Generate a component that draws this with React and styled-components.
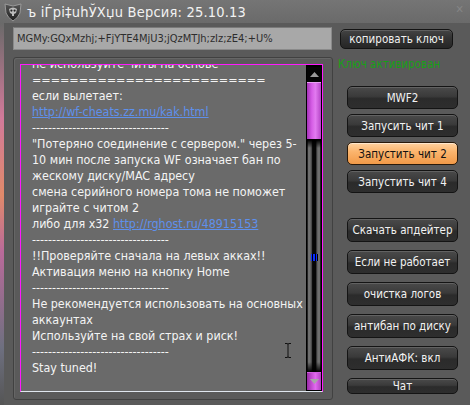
import React from 'react';
import styled, { createGlobalStyle, css } from 'styled-components';

const GlobalStyle = createGlobalStyle`
  html, body {
    margin: 0;
    padding: 0;
    background: #5a5a5a;
  }
  body {
    font-family: 'DejaVu Sans Condensed', 'DejaVu Sans', 'Liberation Sans', sans-serif;
  }
`;

const Window = styled.div`
  width: 470px;
  height: 405px;
  display: flex;
  flex-direction: column;
  overflow: hidden;
  background: #5a5a5a;
`;

const TitleBar = styled.div`
  height: 23px;
  display: flex;
  align-items: center;
  gap: 4px;
  padding: 0 6px 0 3px;
  background: linear-gradient(#757575, #6a6a6a);
  color: #f2f2f2;
  font-size: 14.5px;
  letter-spacing: 0.2px;
`;

const TitleText = styled.span`
  flex: 1;
  white-space: nowrap;
`;

const CloseGlyph = styled.span`
  color: #858585;
  font-size: 11px;
  margin-top: -4px;
`;

const Body = styled.div`
  flex: 1;
  display: flex;
  min-height: 0;
`;

const LeftEdge = styled.div`
  width: 4px;
  flex: none;
  background: linear-gradient(#6a6a6a 0, #d27a9a 25%, #e08a6a 45%, #b96a9a 60%, #6e7080 85%, #555 100%);
`;

const LeftCol = styled.div`
  width: 330px;
  flex: none;
  display: flex;
  flex-direction: column;
  gap: 7px;
  padding: 4px 0 5px 9px;
  box-sizing: border-box;
`;

const KeyField = styled.div`
  height: 23px;
  width: 319px;
  box-sizing: border-box;
  background: #a8a8a8;
  border: 1px solid #8a8a8a;
  border-top-color: #7a7a7a;
  color: #2d2d2d;
  font-size: 11px;
  line-height: 21px;
  padding-left: 3px;
  white-space: nowrap;
  overflow: hidden;
`;

const GroupBox = styled.div`
  flex: 1;
  min-height: 0;
  width: 320px;
  box-sizing: border-box;
  border: 1px solid #414141;
  border-radius: 3px;
  box-shadow: inset 1px 1px 0 #666;
  padding: 6px 9px 7px 6px;
  display: flex;
`;

const TextArea = styled.div`
  flex: 1;
  min-width: 0;
  display: flex;
  background: #6a6a6a;
  border: 1px solid #ff19ff;
  border-bottom-color: #dfe6ee;
  position: relative;
`;

const TextContent = styled.div`
  flex: 1;
  min-width: 0;
  overflow: hidden;
  padding-left: 11px;
  color: #f4f4f4;
  font-size: 12.4px;
  line-height: 16px;
`;

const Scrolled = styled.div`
  margin-top: -9px;
`;

const Line = styled.div`
  white-space: nowrap;
  height: 16px;
`;

const UrlText = styled.span`
  color: #5e90ec;
  text-decoration: underline;
`;

const Scrollbar = styled.div`
  width: 16px;
  flex: none;
  display: flex;
  flex-direction: column;
  background: #000;
  border: 1px solid #000;
  border-top-width: 2px;
  box-sizing: border-box;
`;

const ArrowBtn = styled.div`
  height: ${({ h }) => h}px;
  flex: none;
  display: flex;
  align-items: center;
  justify-content: center;
  background: ${({ pink }) =>
    pink ? 'linear-gradient(to right, #9a2aa8, #e36af0 60%, #b040c0)' : '#050505'};
  ${({ pink }) => pink && css`border-top: 1px solid #d060e0;`}
`;

const Thumb = styled.div`
  height: 56px;
  flex: none;
  background: linear-gradient(to right, #a632b8, #d65ee6 35%, #e27af0 60%, #b444c6);
  border-top: 1px solid #e9a0f5;
  border-bottom: 1px solid #000;
`;

const Track = styled.div`
  flex: 1;
  position: relative;
  background:
    linear-gradient(#000 0, rgba(0,0,0,0) 8px, rgba(0,0,0,0) calc(100% - 10px), #000 100%),
    linear-gradient(to right, #000 0, #7a7a7a 12%, #5a5a5a 30%, #060606 40%, #060606 62%, #5a5a5a 72%, #7a7a7a 88%, #000 100%);
`;

const Marker = styled.div`
  position: absolute;
  left: 4px;
  top: 114px;
  width: 7px;
  height: 7px;
  background: repeating-linear-gradient(to right, #0a2cff 0, #0a2cff 1.5px, #000 1.5px, #000 2.5px);
`;

const Cursor = styled.svg`
  position: absolute;
  left: 263px;
  top: 278px;
`;

const RightCol = styled.div`
  flex: 1;
  display: flex;
  flex-direction: column;
  padding-top: 6px;
`;

const btnBase = css`
  box-sizing: border-box;
  border-radius: 5px;
  display: flex;
  align-items: center;
  justify-content: center;
  font-size: 11.5px;
  white-space: nowrap;
  border: 1px solid #141414;
`;

const CopyButton = styled.div`
  ${btnBase};
  margin-left: 6px;
  width: 113px;
  height: 20px;
  color: #f0f0f0;
  background: linear-gradient(#444 0, #333 45%, #262626 100%);
  box-shadow: inset 0 1px 0 rgba(255,255,255,0.15);
`;

const Status = styled.div`
  margin: 9px 0 0 4px;
  height: 12px;
  overflow: hidden;
  color: #17a017;
  font-size: 11.5px;
  line-height: 13px;
  white-space: nowrap;
`;

const ButtonGroup = styled.div`
  display: flex;
  flex-direction: column;
  gap: ${({ gap }) => gap}px;
  margin: ${({ top }) => top}px 0 0 13px;
`;

const Button = styled.div`
  ${btnBase};
  width: 111px;
  height: ${({ h }) => h || 23}px;
  ${({ active }) =>
    active
      ? css`
          color: #111;
          border-color: #2a1a0a;
          background: linear-gradient(#ffd2a0 0, #fbb56e 40%, #f29a48 100%);
          box-shadow: inset 0 1px 0 rgba(255,255,255,0.5);
        `
      : css`
          color: #f2f2f2;
          background: linear-gradient(#4a4a4a 0, #3a3a3a 45%, #2b2b2b 55%, #2e2e2e 100%);
          box-shadow: inset 0 1px 0 rgba(255,255,255,0.14);
        `}
`;

const Logo = () => (
  <svg width="20" height="20" viewBox="0 0 20 20">
    <defs>
      <linearGradient id="sh" x1="0" y1="0" x2="0" y2="1">
        <stop offset="0" stopColor="#555" />
        <stop offset="1" stopColor="#1e1e1e" />
      </linearGradient>
    </defs>
    <path d="M2 2 L10 4 L18 2 L17 11 Q15 16 10 19 Q5 16 3 11 Z" fill="url(#sh)" stroke="#9a9a9a" strokeWidth="1" />
    <path d="M6 7 Q10 4 14 7 L13 11 L11 12 L11 14 L9 14 L9 12 L7 11 Z" fill="#bdbdbd" />
    <circle cx="8.4" cy="8.6" r="1.1" fill="#222" />
    <circle cx="11.6" cy="8.6" r="1.1" fill="#222" />
  </svg>
);

const dash = '-'.repeat(34);
const eq = '='.repeat(25);

export default function App() {
  return (
    <>
      <GlobalStyle />
      <Window>
        <TitleBar>
          <Logo />
          <TitleText>ъ iЃpi‡uhЎXџu Версия: 25.10.13</TitleText>
          <CloseGlyph>✕</CloseGlyph>
        </TitleBar>
        <Body>
          <LeftEdge />
          <LeftCol>
            <KeyField>MGMy:GQxMzhj;+FjYTE4MjU3;jQzMTJh;zIz;zE4;+U%</KeyField>
            <GroupBox>
              <TextArea>
                <TextContent>
                  <Scrolled>
                    <Line>не используйте читы на основе</Line>
                    <Line>{eq}</Line>
                    <Line>если вылетает:</Line>
                    <Line><UrlText>http://wf-cheats.zz.mu/kak.html</UrlText></Line>
                    <Line>{dash}</Line>
                    <Line>"Потеряно соединение с сервером." через 5-</Line>
                    <Line>10 мин после запуска WF означает бан по</Line>
                    <Line>жескому диску/MAC адресу</Line>
                    <Line>смена серийного номера тома не поможет</Line>
                    <Line>играйте с читом 2</Line>
                    <Line>либо для x32 <UrlText>http://rghost.ru/48915153</UrlText></Line>
                    <Line>{dash}</Line>
                    <Line>!!Проверяйте сначала на левых акках!!</Line>
                    <Line>Активация меню на кнопку Home</Line>
                    <Line>{dash}</Line>
                    <Line>Не рекомендуется использовать на основных</Line>
                    <Line>аккаунтах</Line>
                    <Line>Используйте на свой страх и риск!</Line>
                    <Line>{dash}</Line>
                    <Line>Stay tuned!</Line>
                  </Scrolled>
                </TextContent>
                <Scrollbar>
                  <ArrowBtn h={15}>
                    <svg width="9" height="5" viewBox="0 0 9 5"><path d="M0 5 L4.5 0 L9 5 Z" fill="#9a9a9a" /></svg>
                  </ArrowBtn>
                  <Thumb />
                  <Track>
                    <Marker />
                  </Track>
                  <ArrowBtn h={17} pink>
                    <svg width="9" height="5" viewBox="0 0 9 5"><path d="M0 0 L9 0 L4.5 5 Z" fill="#a8a8a8" /></svg>
                  </ArrowBtn>
                </Scrollbar>
                <Cursor width="8" height="15" viewBox="0 0 8 15">
                  <path d="M1 0.5 H3 Q4 0.5 4 1.5 Q4 0.5 5 0.5 H7 M4 1.5 V13.5 M1 14.5 H3 Q4 14.5 4 13.5 Q4 14.5 5 14.5 H7" stroke="#111" strokeWidth="1" fill="none" />
                </Cursor>
              </TextArea>
            </GroupBox>
          </LeftCol>
          <RightCol>
            <CopyButton>копировать ключ</CopyButton>
            <Status>Ключ активирован</Status>
            <ButtonGroup gap={5} top={16}>
              <Button>MWF2</Button>
              <Button>Запусить чит 1</Button>
              <Button active>Запустить чит 2</Button>
              <Button>Запустить чит 4</Button>
            </ButtonGroup>
            <ButtonGroup gap={8} top={25}>
              <Button h={24}>Скачать апдейтер</Button>
              <Button h={24}>Если не работает</Button>
              <Button h={24}>очистка логов</Button>
              <Button h={24}>антибан по диску</Button>
              <Button h={24}>АнтиАФК: вкл</Button>
              <Button h={16}>Чат</Button>
            </ButtonGroup>
          </RightCol>
        </Body>
      </Window>
    </>
  );
}
